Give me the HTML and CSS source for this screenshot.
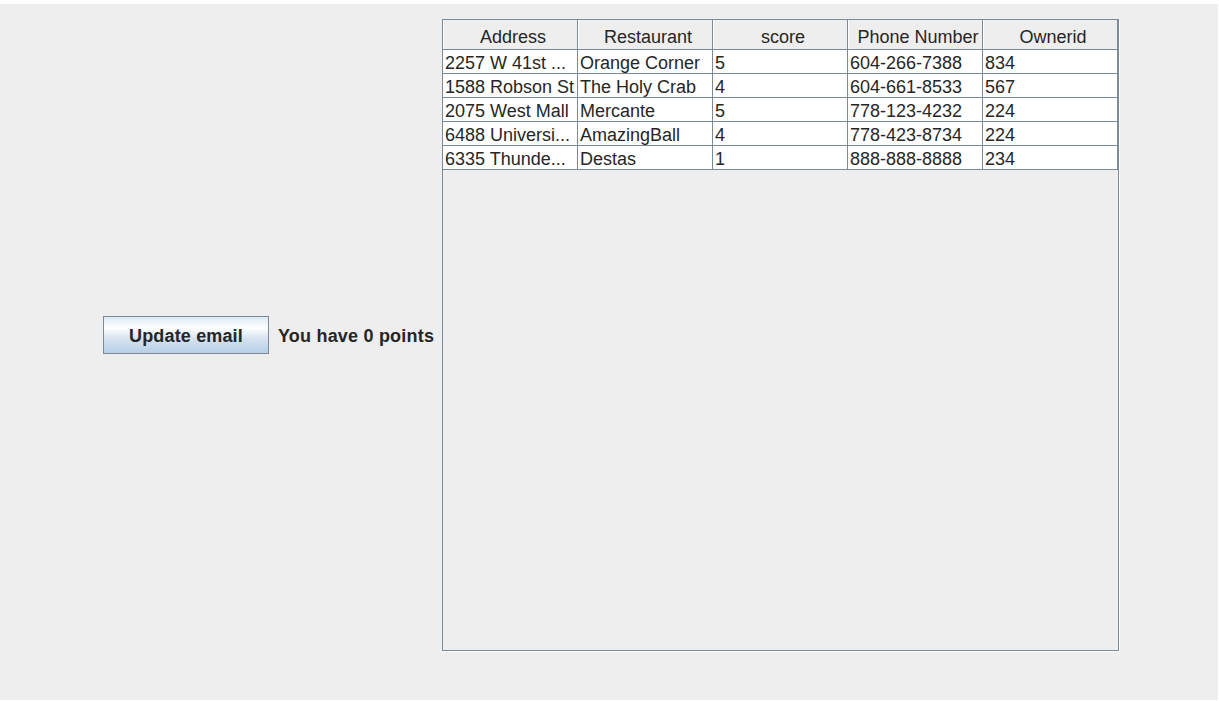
FILE: index.html
```html
<!DOCTYPE html>
<html>
<head>
<meta charset="utf-8">
<link rel="stylesheet" href="styles.css">
</head>
<body>
<div class="frame">
  <div class="side">
    <button class="btn">Update email</button>
    <span class="points">You have 0 points</span>
  </div>
  <div class="pane">
    <div class="grid">
      <div class="th">Address</div>
      <div class="th">Restaurant</div>
      <div class="th">score</div>
      <div class="th">Phone Number</div>
      <div class="th">Ownerid</div>

      <div class="td">2257 W 41st ...</div>
      <div class="td">Orange Corner</div>
      <div class="td">5</div>
      <div class="td">604-266-7388</div>
      <div class="td">834</div>

      <div class="td">1588 Robson St</div>
      <div class="td">The Holy Crab</div>
      <div class="td">4</div>
      <div class="td">604-661-8533</div>
      <div class="td">567</div>

      <div class="td">2075 West Mall</div>
      <div class="td">Mercante</div>
      <div class="td">5</div>
      <div class="td">778-123-4232</div>
      <div class="td">224</div>

      <div class="td">6488 Universi...</div>
      <div class="td">AmazingBall</div>
      <div class="td">4</div>
      <div class="td">778-423-8734</div>
      <div class="td">224</div>

      <div class="td">6335 Thunde...</div>
      <div class="td">Destas</div>
      <div class="td">1</div>
      <div class="td">888-888-8888</div>
      <div class="td">234</div>
    </div>
  </div>
</div>
</body>
</html>
```
FILE: styles.css
```css
html, body {
  margin: 0;
  padding: 0;
  background: #ffffff;
}
body {
  font-family: "Liberation Sans", Arial, sans-serif;
  color: #262626;
}
.frame {
  margin-top: 4px;
  width: 1218px;
  height: 696px;
  background: #eeeeee;
  display: flex;
  align-items: flex-start;
}
.side {
  width: 442px;
  height: 632px;
  margin-top: 15px;
  box-sizing: border-box;
  padding-left: 103px;
  display: flex;
  align-items: center;
  gap: 9px;
}
.btn {
  width: 166px;
  height: 38px;
  margin: 0;
  padding: 3px 0 0 0;
  border: 1px solid #7a8a99;
  background: linear-gradient(to bottom, #dde8f3 0%, #ffffff 30%, #d6e3f0 60%, #b8cfe5 100%);
  font-family: "Liberation Sans", Arial, sans-serif;
  font-weight: bold;
  font-size: 18px;
  line-height: 33px;
  letter-spacing: 0.15px;
  color: #262626;
  margin-top: -1px;
}
.points {
  font-weight: bold;
  font-size: 18px;
  line-height: 36px;
  letter-spacing: 0.2px;
  white-space: nowrap;
  margin-top: 2px;
}
.pane {
  margin-top: 15px;
  width: 677px;
  height: 632px;
  box-sizing: border-box;
  border: 1px solid #7a8a99;
  box-shadow: 1px 1px 0 #ffffff;
  background: #eeeeee;
}
.grid {
  display: grid;
  grid-template-columns: repeat(5, 135px);
}
.th {
  height: 30px;
  box-sizing: border-box;
  border-right: 1px solid #7a8a99;
  border-bottom: 1px solid #7a8a99;
  box-shadow: inset 1px 0 0 #ffffff;
  background: #eeeeee;
  text-align: center;
  padding: 1px 0 0 6px;
  font-size: 18px;
  line-height: 32px;
  white-space: nowrap;
  overflow: hidden;
}
.td {
  height: 24px;
  box-sizing: border-box;
  border-right: 1px solid #7a8a99;
  border-bottom: 1px solid #7a8a99;
  background: #ffffff;
  padding: 1px 0 0 2px;
  font-size: 18px;
  line-height: 24px;
  white-space: nowrap;
  overflow: hidden;
}
```
